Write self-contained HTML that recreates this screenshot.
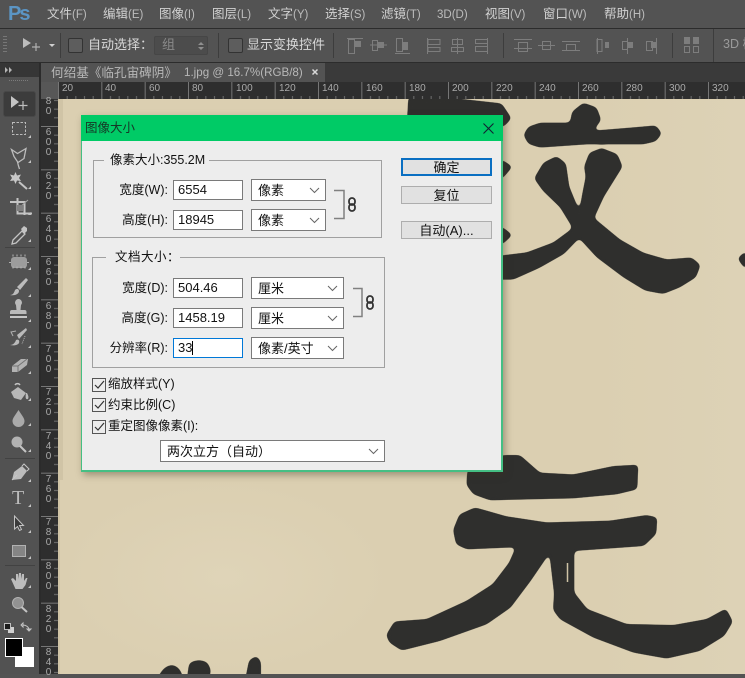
<!DOCTYPE html>
<html><head><meta charset="utf-8">
<style>
html,body{margin:0;padding:0}
body{width:745px;height:674px;overflow:hidden;position:relative;background:#535353;font-family:"Liberation Sans","Noto Sans CJK SC",sans-serif;font-size:12.5px;color:#111}
.a{position:absolute}
.t{position:absolute;white-space:nowrap;line-height:16px}
.m{color:#d2d2d2;font-size:12.5px;top:6px}
.m small{font-size:11.5px;color:#bcbcbc}
.o{color:#d8d8d8;font-size:13px}
.rt{position:absolute;top:83px;font-size:10px;line-height:12px;color:#aaa}
.rv{position:absolute;left:44px;width:9px;text-align:center;font-size:10px;line-height:10px;color:#aaa}
.cb{position:absolute;width:12px;height:12px;border:1px solid #555;background:#ececec}
.opt{position:absolute;width:13px;height:13px;border:1px solid #333;border-radius:2px;background:#5d5d5d}
.in{position:absolute;box-sizing:border-box;background:#fff;border:1px solid #7a7a7a;padding-left:4px;line-height:18px;font-size:13px;white-space:nowrap}
.sel{position:absolute;box-sizing:border-box;background:#fff;border:1px solid #7a7a7a;padding-left:6px;line-height:21px;font-size:13px;white-space:nowrap}
.sel svg{position:absolute;right:5px;top:7px}
.gb{position:absolute;box-sizing:border-box;border:1px solid #a0a0a0}
.lg{position:absolute;background:#ededed;white-space:nowrap;line-height:16px;font-size:12.5px}
.btn{position:absolute;box-sizing:border-box;width:91px;height:18px;background:#e1e1e1;border:1px solid #adadad;text-align:center;line-height:18px;font-size:13px}
</style></head><body>

<!-- canvas paper -->
<div class="a" style="left:58px;top:99px;width:687px;height:575px;background:#dbcfb1"></div>
<div class="a" style="left:58px;top:99px;width:5px;height:575px;background:#d0c4a6"></div>
<div class="a" style="left:60px;top:480px;width:330px;height:194px;background:radial-gradient(ellipse at center,#dfd4b8 0,#dbcfb1 70%)"></div>
<div class="a" style="left:600px;top:100px;width:145px;height:574px;background:linear-gradient(90deg,#dbcfb1,#ddd2b6)"></div>

<!-- calligraphy -->
<svg class="a" style="left:0;top:0" width="745" height="674" viewBox="0 0 745 674">
<defs>
<filter id="ink" filterUnits="userSpaceOnUse" x="0" y="90" width="760" height="600" color-interpolation-filters="sRGB">
<feGaussianBlur stdDeviation="2.300"/>
<feComponentTransfer><feFuncA type="linear" slope="9" intercept="-4"/></feComponentTransfer>
</filter>
</defs>
<g filter="url(#ink)">
<g fill="#2f2f2d" transform="translate(380,90) scale(.33333)">
<path d="M85 20L230 25L365 40L395 85L372 110L80 110Z"/>
<path d="M360 205L398 230L360 275Z"/>
<path d="M360 405L398 435L360 470Z"/>
<path d="M1100 480L1072 505L1100 545Z"/>
<path d="M430 135L445 110L480 98L570 98L576 65L610 38L650 52L664 90L640 122L760 112L828 106L846 130L828 154L790 163L620 163L480 173L445 162Z"/>
<path d="M462 265L490 218L530 198L558 220L568 290L600 368L640 382L720 448L790 488L860 508L935 502L962 525L948 562L900 592L850 612L795 602L730 562L650 502L595 442L540 352L488 302Z"/>
<path d="M612 230L628 188L665 174L712 192L728 230L703 270L672 320L642 385L600 442L552 492L480 533L400 569L350 569L350 498L440 487L520 457L573 418L597 368L607 310L617 260Z"/>
</g>
<g fill="#2f2f2d" transform="translate(360,460) scale(.33333)">
<path d="M430 -15L480 -15L540 38L640 43L760 18L835 14L832 88L770 103L640 115L390 121L340 103L319 75L322 30Z"/>
<path d="M279 210L298 163L345 142L380 152L440 169L560 187L750 182L860 165L892 172L889 222L852 258L643 273L643 398L682 447L800 492L940 495L1040 477L1098 445L1119 485L1093 528L1020 573L920 596L820 578L700 533L600 478L579 450L582 400L568 280L555 300L512 363L452 443L380 493L240 543L125 572L88 548L78 525L103 484L200 477L320 422L398 372L447 308L467 262L320 268L288 253Z"/>
</g>
<g fill="#2f2f2d" transform="translate(55,460) scale(.33333)">
<path d="M305 660Q325 612 355 615Q380 622 385 660Z"/>
<path d="M395 660L402 610Q430 592 458 608L468 630L462 660Z"/>
<path d="M570 660L582 600L605 587L618 605L618 660Z"/>
</g>
</g>
<path d="M567.500 563v19" stroke="#cfc3a6" stroke-width="1.500" fill="none"/>
</svg>

<!-- top bars -->
<div class="a" style="left:0;top:0;width:745px;height:28px;background:#535353"></div>
<div class="a" style="left:0;top:28px;width:745px;height:1px;background:#2c2c2c"></div>
<div class="a" style="left:0;top:29px;width:745px;height:33px;background:#535353"></div>
<div class="a" style="left:0;top:62px;width:745px;height:1px;background:#2c2c2c"></div>
<div class="a" style="left:0;top:63px;width:745px;height:19px;background:#3a3a3a"></div>

<div class="t" style="left:8px;top:4px;font-size:20px;line-height:20px;font-weight:bold;color:#5b95c4;letter-spacing:-2px">Ps</div>
<div class="t m" style="left:47px">文件<small>(F)</small></div>
<div class="t m" style="left:103px">编辑<small>(E)</small></div>
<div class="t m" style="left:159px">图像<small>(I)</small></div>
<div class="t m" style="left:212px">图层<small>(L)</small></div>
<div class="t m" style="left:268px">文字<small>(Y)</small></div>
<div class="t m" style="left:325px">选择<small>(S)</small></div>
<div class="t m" style="left:381px">滤镜<small>(T)</small></div>
<div class="t m" style="left:437px"><small>3D(D)</small></div>
<div class="t m" style="left:485px">视图<small>(V)</small></div>
<div class="t m" style="left:543px">窗口<small>(W)</small></div>
<div class="t m" style="left:604px">帮助<small>(H)</small></div>

<!-- options bar -->
<svg class="a" style="left:0;top:29px" width="745" height="33" viewBox="0 29 745 33">
<g fill="#777"><rect x="3" y="36" width="4" height="1"/><rect x="3" y="39" width="4" height="1"/><rect x="3" y="42" width="4" height="1"/><rect x="3" y="45" width="4" height="1"/><rect x="3" y="48" width="4" height="1"/><rect x="3" y="51" width="4" height="1"/></g>
<path d="M23 38l8 5-8 5z" fill="#bcbcbc"/>
<path d="M36 43v8M32 47h8" stroke="#b0b0b0" stroke-width="1.200"/>
<path d="M49 44h6l-3 3z" fill="#d0d0d0"/>
<g stroke="#3d3d3d"><path d="M60.500 33v25M218.500 33v25M333.500 33v25M503.500 33v25M672.500 33v25M713.500 29v33"/></g>
<g fill="none" stroke="#7d7d7d">
<path d="M348.500 39.500h6v14h-6zM347 38.500h16"/>
<path d="M370 45h17M372.500 40.500h5v10h-5z"/>
<path d="M396.500 38.500h6v13h-6zM395 53.500h15"/>
<path d="M427.500 38v16M428 39.500h12v5h-12zM428 47.500h12v4h-12z"/>
<path d="M457.500 38v16M452.500 39.500h10v5h-10zM451.500 47.500h12v4h-12z"/>
<path d="M487.500 38v16M475.500 39.500h12v4h-12zM475.500 46.500h12v5h-12z"/>
<path d="M514 39.500h18M514 48.500h18M518.500 42.500h9v9h-9z"/>
<path d="M538 45.500h17M542.500 41.500h8v8h-8z"/>
<path d="M562 41.500h18M562 50.500h18M566.500 44.500h9v6h-9z"/>
<path d="M597.500 38v16M597 39.500h5v12h-5z"/>
<path d="M627.500 38v16M622.500 41.500h5v8h-5z"/>
<path d="M656.500 38v16M646.500 41.500h6v9h-6z"/>
<path d="M684.500 46.500h5v6h-5zM693.500 46.500h5v6h-5z"/>
</g>
<g fill="#7d7d7d">
<rect x="355" y="41" width="6" height="6"/><rect x="378" y="42" width="6" height="6"/><rect x="403" y="42" width="5" height="8"/>
<rect x="605" y="42" width="4" height="6"/><rect x="628" y="42" width="5" height="6"/><rect x="651" y="42" width="5" height="6"/>
<rect x="684" y="37" width="6" height="7"/><rect x="693" y="37" width="6" height="7"/>
</g>
</svg>
<div class="opt" style="left:68px;top:38px"></div>
<div class="t o" style="left:88px;top:37px">自动选择：</div>
<div class="a" style="left:154px;top:36px;width:54px;height:19px;background:#4c4c4c;border-radius:2px;box-shadow:inset 0 0 0 1px #464646"></div>
<div class="t" style="left:162px;top:37px;color:#8a8a8a;font-size:13px">组</div>
<svg class="a" style="left:197px;top:41px" width="9" height="10"><path d="M1 4l3-3 3 3zM1 6l3 3 3-3z" fill="#8f8f8f"/></svg>
<div class="opt" style="left:228px;top:38px"></div>
<div class="t o" style="left:247px;top:37px">显示变换控件</div>
<div class="t" style="left:723px;top:36px;color:#9a9a9a;font-size:12.5px">3D 模</div>

<!-- tab -->
<div class="a" style="left:41px;top:63px;width:284px;height:19px;background:#535353"></div>
<div class="t" style="left:51px;top:65px;font-size:12.600px;color:#b8b8b8">何绍基《临孔宙碑阴》</div>
<div class="t" style="left:184px;top:65px;font-size:11.600px;color:#b8b8b8">1.jpg @ 16.7%(RGB/8)</div>
<svg class="a" style="left:311px;top:68px" width="8" height="8"><path d="M1.500 1.500l5 5M6.500 1.500l-5 5" stroke="#d8d8d8" stroke-width="1.500"/></svg>

<!-- rulers -->
<div class="a" style="left:41px;top:82px;width:704px;height:17px;background:#2e2e2e"></div>
<div class="a" style="left:41px;top:82px;width:17px;height:592px;background:#2e2e2e"></div>
<div class="a" style="left:41px;top:82px;width:17px;height:17px;background:#575757"></div>
<svg class="a" style="left:0;top:0" width="745" height="674">
<defs>
<pattern id="ph" x="58" y="82" width="43.333" height="17" patternUnits="userSpaceOnUse">
<rect x="0" y="0" width="1" height="17" fill="#777"/>
<rect x="8.670" y="14" width="1" height="3" fill="#707070"/><rect x="17.330" y="14" width="1" height="3" fill="#707070"/><rect x="26" y="14" width="1" height="3" fill="#707070"/><rect x="34.670" y="14" width="1" height="3" fill="#707070"/>
</pattern>
<pattern id="pv" x="41" y="126" width="17" height="43.333" patternUnits="userSpaceOnUse">
<rect x="0" y="0" width="17" height="1" fill="#777"/>
<rect x="13" y="8.670" width="4" height="1" fill="#707070"/><rect x="13" y="17.330" width="4" height="1" fill="#707070"/><rect x="13" y="26" width="4" height="1" fill="#707070"/><rect x="13" y="34.670" width="4" height="1" fill="#707070"/>
</pattern>
</defs>
<rect x="58" y="82" width="687" height="17" fill="url(#ph)"/>
<rect x="41" y="99" width="17" height="575" fill="url(#pv)"/>
</svg>
<div class="rt" style="left:62px">20</div><div class="rt" style="left:105px">40</div><div class="rt" style="left:149px">60</div><div class="rt" style="left:192px">80</div><div class="rt" style="left:236px">100</div><div class="rt" style="left:279px">120</div><div class="rt" style="left:322px">140</div><div class="rt" style="left:366px">160</div><div class="rt" style="left:409px">180</div><div class="rt" style="left:452px">200</div><div class="rt" style="left:496px">220</div><div class="rt" style="left:539px">240</div><div class="rt" style="left:582px">260</div><div class="rt" style="left:626px">280</div><div class="rt" style="left:669px">300</div><div class="rt" style="left:712px">320</div>

<div class="rv" style="top:97px">8<br>0</div>
<div class="rv" style="top:128px">6<br>0<br>0</div>
<div class="rv" style="top:172px">6<br>2<br>0</div>
<div class="rv" style="top:215px">6<br>4<br>0</div>
<div class="rv" style="top:258px">6<br>6<br>0</div>
<div class="rv" style="top:302px">6<br>8<br>0</div>
<div class="rv" style="top:345px">7<br>0<br>0</div>
<div class="rv" style="top:388px">7<br>2<br>0</div>
<div class="rv" style="top:432px">7<br>4<br>0</div>
<div class="rv" style="top:475px">7<br>6<br>0</div>
<div class="rv" style="top:518px">7<br>8<br>0</div>
<div class="rv" style="top:562px">8<br>0<br>0</div>
<div class="rv" style="top:605px">8<br>2<br>0</div>
<div class="rv" style="top:648px">8<br>4<br>0</div>

<!-- tool panel -->
<div class="a" style="left:0;top:63px;width:39px;height:14px;background:#363636"></div>
<div class="a" style="left:39px;top:63px;width:2px;height:611px;background:#2b2b2b"></div>
<div class="a" style="left:0;top:77px;width:39px;height:597px;background:#525252"></div>
<div class="a" style="left:4px;top:92px;width:31px;height:24px;background:#3c3c3c;border-radius:2px;box-shadow:0 0 0 1px #484848"></div>
<svg class="a" style="left:0;top:63px" width="39" height="611" viewBox="0 63 39 611">
<path d="M5 67l3 3-3 3zM9 67l3 3-3 3z" fill="#b5b5b5"/>
<path d="M9 80.500h20" stroke="#7c7c7c" stroke-dasharray="1 1"/>
<!-- move -->
<path d="M11 96l8 6-8 6z" fill="#c4c4c4"/><path d="M23 101v9M18.500 105.500h9" stroke="#bdbdbd" stroke-width="1.200"/>
<!-- marquee -->
<rect x="12.500" y="122.500" width="13" height="12" fill="none" stroke="#bcbcbc" stroke-dasharray="2.500 1.500"/>
<!-- lasso -->
<path d="M11.500 149.500l6 4 8.500-5-2 10-6 4-4-6zM17.500 162l1 4 1 3" fill="none" stroke="#bcbcbc" stroke-width="1.300"/>
<!-- wand -->
<path d="M15.500 172l1.500 3.500 4-1-2 3.500 2 3-4-.5-1.500 3.500-1.500-3.500-4 .5 2-3-2-3.500 4 1z" fill="#c8c8c8"/><path d="M19 182l8 7" stroke="#c4c4c4" stroke-width="2"/>
<!-- crop -->
<path d="M11 203h14.500v13M18.500 199v15.500H33" transform="translate(-1,-1)" fill="none" stroke="#c4c4c4" stroke-width="2"/><path d="M19 208l9-8" stroke="#a0a0a0"/><rect x="17" y="205" width="6" height="6" fill="#808080"/>
<!-- eyedrop -->
<path d="M13 240l9-9 3 3-9 9-4 1z" fill="none" stroke="#c4c4c4" stroke-width="1.300"/><path d="M21 229l3-3 3 2 0 3-3 3z" fill="#c4c4c4"/>
<path d="M5 247.500h30" stroke="#424242"/>
<!-- heal -->
<rect x="11" y="257" width="16" height="11" rx="3" fill="#9c9c9c"/><path d="M13 254.500v16M17 254.500v16M21 254.500v16M25 254.500v16" stroke="#b6b6b6" stroke-dasharray="2 10"/><path d="M9 262.500h20" stroke="#b0b0b0" stroke-dasharray="2 16"/>
<!-- brush -->
<path d="M17 287l9-9 2 2-8 10z" fill="#bcbcbc"/><path d="M10 295c3 0 4-2 5-5 2-2 4-1 4 1 0 3-4 5-9 4z" fill="#bcbcbc"/>
<!-- stamp -->
<path d="M16 305a3.500 3.500 0 1 1 5 0l-.5 5h4a2 2 0 0 1 2 2v2H10v-2a2 2 0 0 1 2-2h4.500z" fill="#bababa"/><rect x="10" y="316" width="17" height="2" fill="#c6c6c6"/>
<!-- history -->
<path d="M17 335l9-7 1 2-8 9z" fill="#bababa"/><path d="M10 345c3 0 5-2 6-5 2-1 4 0 3 3-1 2-5 3-9 2z" fill="#bababa"/><path d="M16 331l-5 1 2 4" fill="none" stroke="#b0b0b0"/><path d="M25 336l-3 8" stroke="#b0b0b0" stroke-dasharray="1 1"/>
<!-- eraser -->
<path d="M12 366l9-7h7l-1 6-9 7h-6z" fill="#b2b2b2"/><path d="M12 366h6v6M18 366l9-7" fill="none" stroke="#747474"/>
<!-- bucket -->
<path d="M11 392l7-5 8 6-5 7-7-2z" fill="#b8b8b8"/><path d="M15 385a3 3 0 0 1 5 0" fill="none" stroke="#c2c2c2" stroke-width="1.500"/><path d="M27 393c1 2 2 4 1 6-2 1-3-1-2-6z" fill="#bababa"/>
<!-- drop -->
<path d="M18.500 410c3 5 6 8 6 11a6 6 0 0 1-12 0c0-3 3-6 6-11z" fill="#aaa"/>
<!-- dodge -->
<circle cx="17" cy="442" r="5.500" fill="#b2b2b2"/><path d="M20 446l6 6" stroke="#c4c4c4" stroke-width="2"/>
<path d="M5 458.500h30" stroke="#424242"/>
<!-- pen -->
<path d="M12 480l2-8 8-6 5 5-6 8z" fill="#bcbcbc"/><path d="M22 466l2-2 5 5-2 2M12 480l5-5" fill="none" stroke="#c6c6c6"/>
<!-- path select -->
<path d="M14.500 516v13l3-2.500 2 4 2-1-2-4h4z" fill="#3a3a3a" stroke="#c4c4c4"/>
<!-- rect -->
<rect x="12.500" y="545.500" width="13" height="11" fill="#858585" stroke="#b2b2b2"/>
<path d="M5 565.500h30" stroke="#424242"/>
<!-- hand -->
<path d="M11 579l2-1 3 3v-7h2v5l1-6h2v6l1-5h2v7l2-3h1.500l-2 7-3 4h-7z" fill="#bcbcbc"/>
<!-- zoom -->
<circle cx="18" cy="603" r="5.500" fill="#929292" stroke="#b2b2b2"/><path d="M21.500 607l5.500 5" stroke="#c4c4c4" stroke-width="2"/>
<!-- small colors -->
<rect x="8" y="627" width="6" height="6" fill="#d0d0d0"/><rect x="4.500" y="623.500" width="6" height="6" fill="#1b1b1b" stroke="#c0c0c0"/>
<path d="M23 625c3 0 6 2 6 5M23 623v4l-2-2zM27 629h4l-2 2z" fill="none" stroke="#c4c4c4"/>
<!-- swatches -->
<rect x="15" y="647" width="19" height="20" fill="#fff"/>
<rect x="5.500" y="638.500" width="17" height="18" fill="#000" stroke="#fff"/>
<!-- corner triangles -->
<g fill="#c4c4c4">
<path d="M28 138l3-3v3zM28 163l3-3v3zM28 189l3-3v3zM28 215l3-3v3zM28 242l3-3v3zM28 270l3-3v3zM28 297l3-3v3zM28 322l3-3v3zM28 348l3-3v3zM28 374l3-3v3zM28 401l3-3v3zM28 426l3-3v3zM28 452l3-3v3zM28 482l3-3v3zM28 507l3-3v3zM28 533l3-3v3zM28 559l3-3v3zM28 588l3-3v3z"/>
</g>
</svg>
<div class="t" style="left:12px;top:487px;font-family:'Liberation Serif',serif;font-size:20px;line-height:22px;color:#bcbcbc">T</div>

<!-- dialog -->
<div class="a" style="left:81px;top:115px;width:422px;height:357px;box-sizing:border-box;background:#ededed;border:solid #45bf84;border-width:0 2px 2px 1.500px;box-shadow:2px 3px 7px rgba(60,50,30,.4)"></div>
<div class="a" style="left:81px;top:115px;width:422px;height:26px;background:#00cb66"></div>
<div class="t" style="left:85px;top:120px;font-size:12.5px;color:#163626">图像大小</div>
<svg class="a" style="left:482px;top:122px" width="13" height="13"><path d="M1.500 1.500l10 10M11.500 1.500l-10 10" stroke="#123" stroke-width="1.100"/></svg>

<div class="gb" style="left:93px;top:160px;width:289px;height:78px"></div>
<div class="lg" style="left:104px;top:152px;width:105px;box-sizing:border-box;padding-left:6px">像素大小:355.2M</div>

<div class="t" style="left:100px;width:68px;text-align:right;top:182px">宽度(W):</div>
<div class="in" style="left:173px;top:180px;width:70px;height:20px">6554</div>
<div class="sel" style="left:251px;top:179px;width:75px;height:22px">像素<svg width="11" height="7"><path d="M1 1l4.500 4.500L10 1" fill="none" stroke="#666"/></svg></div>
<div class="t" style="left:100px;width:68px;text-align:right;top:212px">高度(H):</div>
<div class="in" style="left:173px;top:210px;width:70px;height:20px">18945</div>
<div class="sel" style="left:251px;top:209px;width:75px;height:22px">像素<svg width="11" height="7"><path d="M1 1l4.500 4.500L10 1" fill="none" stroke="#666"/></svg></div>
<svg class="a" style="left:333px;top:188px" width="26" height="32"><path d="M1 2.500h10v28H1" fill="none" stroke="#808080" stroke-width="1.500"/><rect x="16" y="10" width="6" height="7" rx="3" fill="none" stroke="#333" stroke-width="1.800"/><rect x="16" y="16" width="6" height="7" rx="3" fill="none" stroke="#333" stroke-width="1.800"/></svg>

<div class="gb" style="left:92px;top:257px;width:293px;height:111px"></div>
<div class="lg" style="left:106px;top:249px;width:74px;box-sizing:border-box;padding-left:9px;letter-spacing:.5px">文档大小：</div>

<div class="t" style="left:100px;width:68px;text-align:right;top:280px">宽度(D):</div>
<div class="in" style="left:173px;top:278px;width:70px;height:20px">504.46</div>
<div class="sel" style="left:251px;top:277px;width:93px;height:22px">厘米<svg width="11" height="7"><path d="M1 1l4.500 4.500L10 1" fill="none" stroke="#666"/></svg></div>
<div class="t" style="left:100px;width:68px;text-align:right;top:310px">高度(G):</div>
<div class="in" style="left:173px;top:308px;width:70px;height:20px">1458.19</div>
<div class="sel" style="left:251px;top:307px;width:93px;height:22px">厘米<svg width="11" height="7"><path d="M1 1l4.500 4.500L10 1" fill="none" stroke="#666"/></svg></div>
<div class="t" style="left:100px;width:68px;text-align:right;top:340px">分辨率(R):</div>
<div class="in" style="left:173px;top:338px;width:70px;height:20px;border-color:#0078d7">33</div>
<div class="a" style="left:192px;top:341px;width:1px;height:14px;background:#000"></div>
<div class="sel" style="left:251px;top:337px;width:93px;height:22px">像素/英寸<svg width="11" height="7"><path d="M1 1l4.500 4.500L10 1" fill="none" stroke="#666"/></svg></div>
<svg class="a" style="left:352px;top:286px" width="26" height="32"><path d="M1 2.500h9v28H1" fill="none" stroke="#808080" stroke-width="1.500"/><rect x="15" y="10" width="6" height="7" rx="3" fill="none" stroke="#333" stroke-width="1.800"/><rect x="15" y="16" width="6" height="7" rx="3" fill="none" stroke="#333" stroke-width="1.800"/></svg>

<div class="btn" style="left:401px;top:158px;border:2px solid #0a6fc2;line-height:16px">确定</div>
<div class="btn" style="left:401px;top:186px;line-height:17px">复位</div>
<div class="btn" style="left:401px;top:221px;line-height:17px">自动(A)...</div>

<div class="cb" style="left:92px;top:378px"></div>
<div class="cb" style="left:92px;top:398px"></div>
<div class="cb" style="left:92px;top:420px"></div>
<svg class="a" style="left:92px;top:378px" width="14" height="56"><path d="M3 7l3 3 6-7M3 27l3 3 6-7M3 49l3 3 6-7" fill="none" stroke="#333" stroke-width="1.200"/></svg>
<div class="t" style="left:108px;top:376px">缩放样式(Y)</div>
<div class="t" style="left:108px;top:397px">约束比例(C)</div>
<div class="t" style="left:108px;top:418px">重定图像像素(I):</div>
<div class="sel" style="left:160px;top:440px;width:225px;height:22px">两次立方（自动）<svg width="11" height="7"><path d="M1 1l4.500 4.500L10 1" fill="none" stroke="#666"/></svg></div>

</body></html>
